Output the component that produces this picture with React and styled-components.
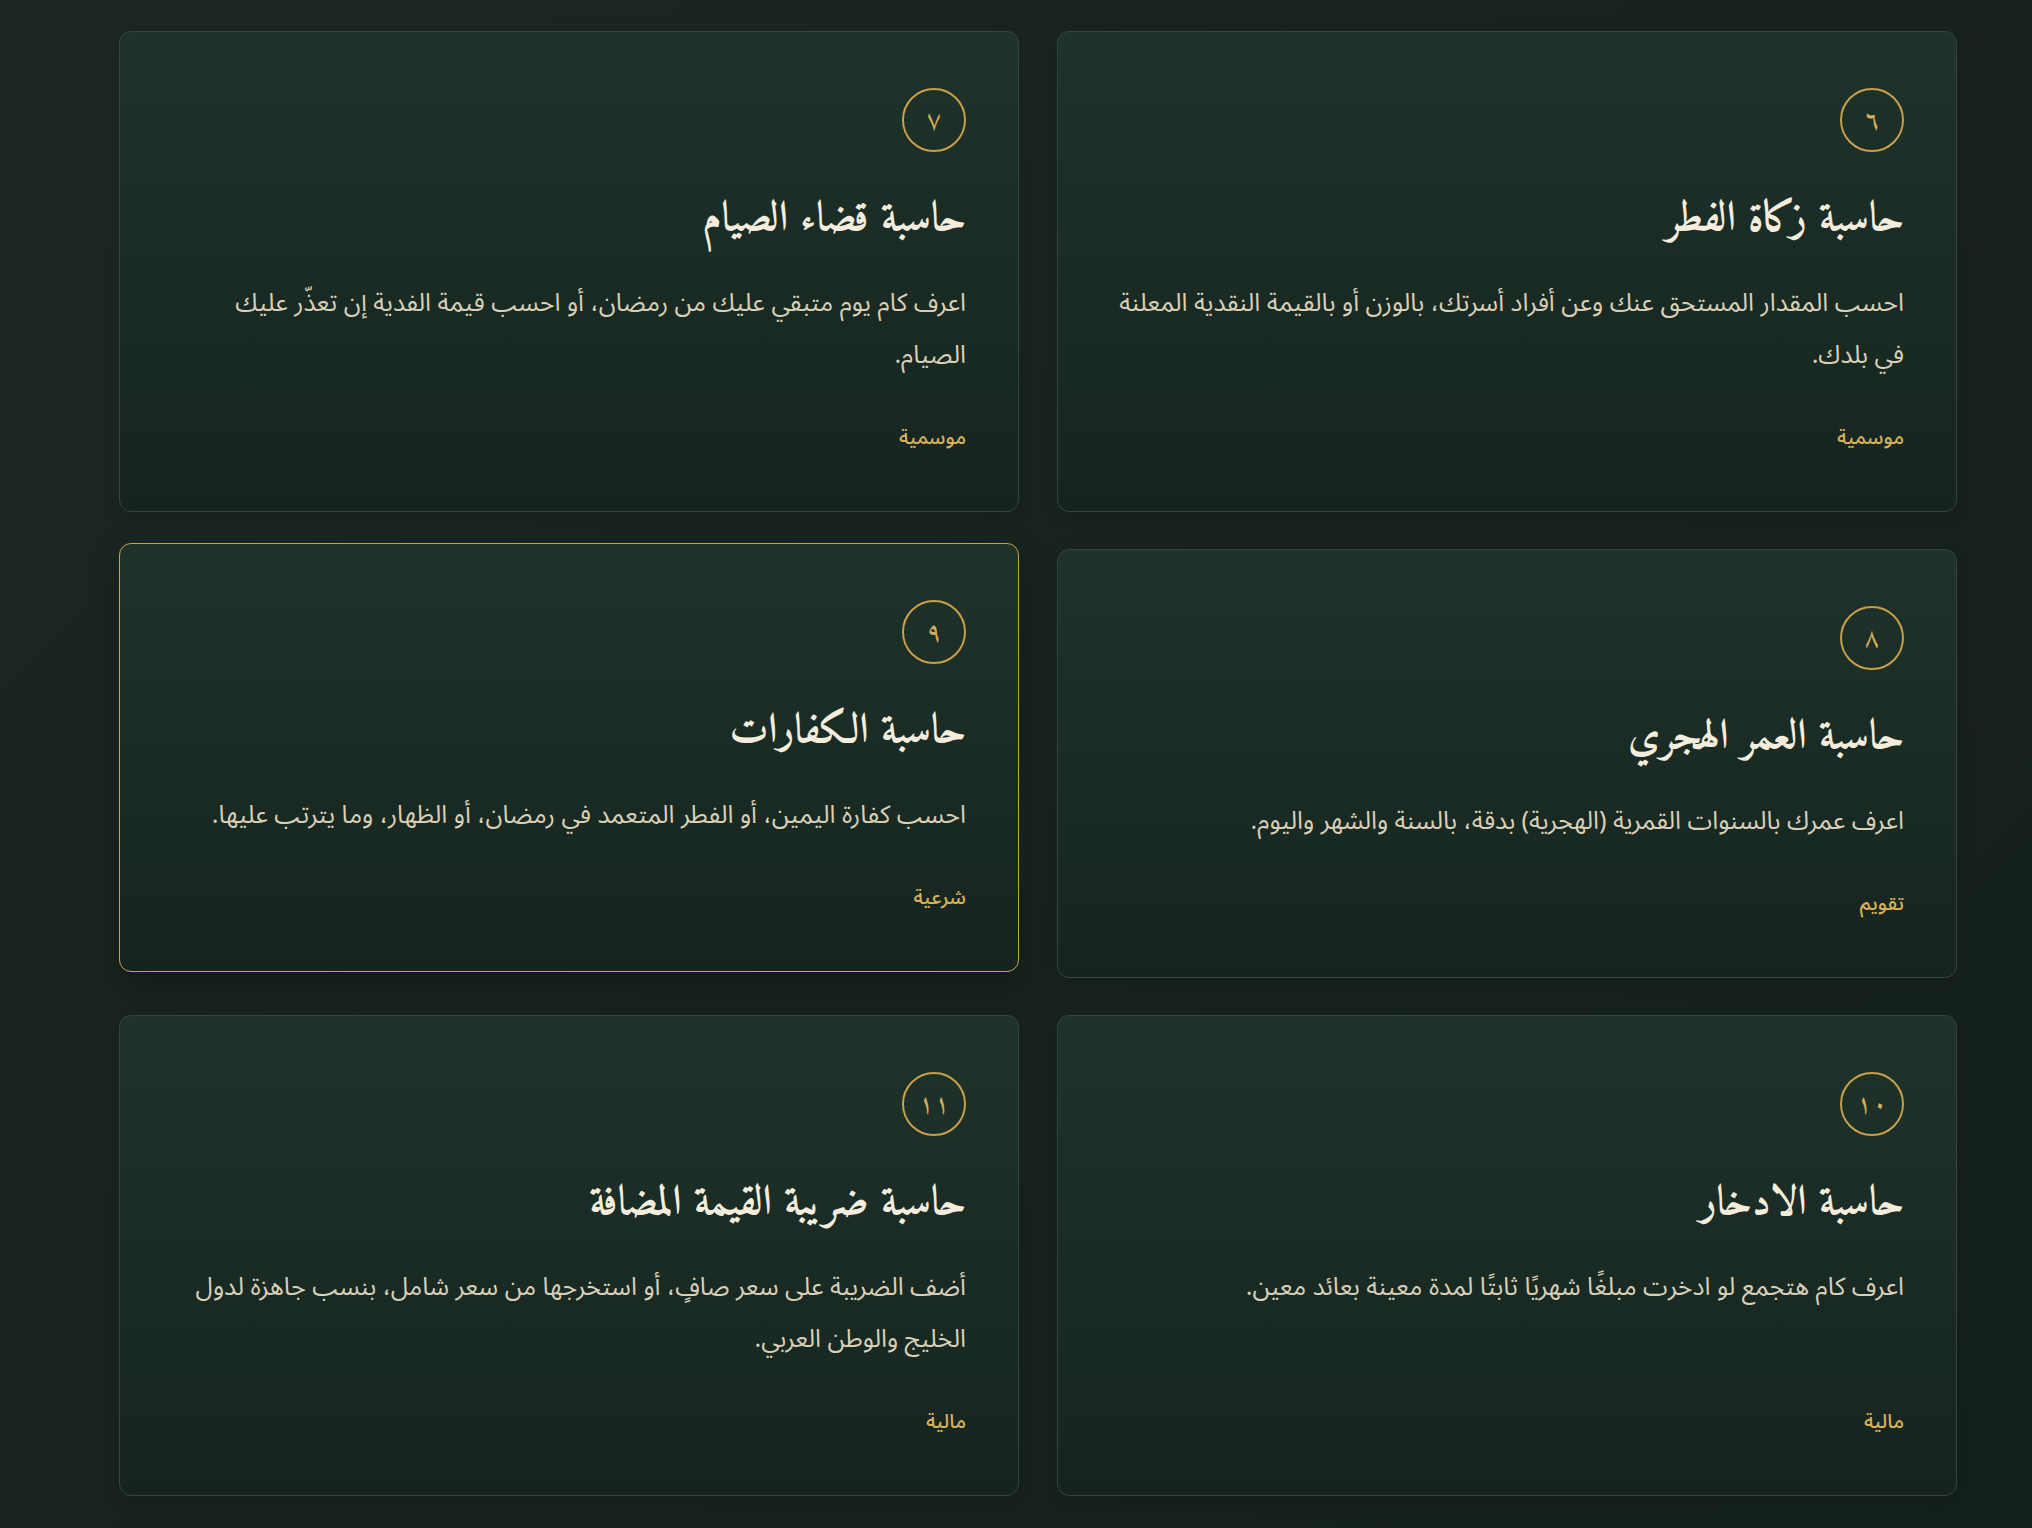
import React from "react";
import styled, { createGlobalStyle } from "styled-components";

const GlobalStyle = createGlobalStyle`
  html, body {
    margin: 0;
    padding: 0;
  }
  body {
    min-height: 100vh;
    background: linear-gradient(135deg, #1c2722 0%, #18231f 50%, #14201b 100%);
    font-family: "Noto Sans Arabic", "DejaVu Sans", sans-serif;
  }
`;

const Page = styled.main`
  min-height: 1528px;
  box-sizing: border-box;
  padding: 31px 75px 0 119px;
`;

const Grid = styled.section`
  direction: rtl;
  display: grid;
  grid-template-columns: repeat(2, 900px);
  gap: 37px 38px;
`;

const Card = styled.article`
  box-sizing: border-box;
  display: flex;
  flex-direction: column;
  align-items: flex-start;
  padding: 56px 52px 58px 52px;
  border-radius: 12px;
  border: 1px solid ${(p) => (p.$active ? "#c9a24c" : "#34453d")};
  background: linear-gradient(180deg, #1f332b 0%, #1a2c25 45%, #16241f 100%);
  transform: ${(p) => (p.$active ? "translateY(-6px)" : "none")};
  box-shadow: ${(p) =>
    p.$active ? "0 14px 30px rgba(0, 0, 0, 0.25)" : "0 4px 14px rgba(0, 0, 0, 0.15)"};
`;

const Badge = styled.div`
  box-sizing: border-box;
  width: 64px;
  height: 64px;
  border-radius: 50%;
  border: 2px solid #c9a04a;
  display: flex;
  align-items: center;
  justify-content: center;
  color: #d4ad58;
  font-family: "Amiri", "Noto Naskh Arabic", serif;
  font-size: 27px;
  line-height: 1;
  padding-top: 2px;
  margin-bottom: 40px;
`;

const Title = styled.h3`
  margin: 0 0 29px;
  font-family: "Amiri", "Noto Naskh Arabic", serif;
  font-weight: 700;
  font-size: 42px;
  line-height: 56px;
  color: #f4ecdc;
`;

const Description = styled.p`
  margin: 0 0 42px;
  font-family: "Noto Sans Arabic", "DejaVu Sans", sans-serif;
  font-weight: 400;
  font-size: 25px;
  line-height: 52px;
  color: #d9cfb7;
`;

const Tag = styled.span`
  margin-top: auto;
  font-family: "Noto Sans Arabic", "DejaVu Sans", sans-serif;
  font-size: 20px;
  font-weight: 500;
  line-height: 30px;
  color: #d8b05a;
`;

const tools = [
  {
    n: "٦",
    title: "حاسبة زكاة الفطر",
    desc: "احسب المقدار المستحق عنك وعن أفراد أسرتك، بالوزن أو بالقيمة النقدية المعلنة في بلدك.",
    tag: "موسمية",
  },
  {
    n: "٧",
    title: "حاسبة قضاء الصيام",
    desc: "اعرف كام يوم متبقي عليك من رمضان، أو احسب قيمة الفدية إن تعذّر عليك الصيام.",
    tag: "موسمية",
  },
  {
    n: "٨",
    title: "حاسبة العمر الهجري",
    desc: "اعرف عمرك بالسنوات القمرية (الهجرية) بدقة، بالسنة والشهر واليوم.",
    tag: "تقويم",
  },
  {
    n: "٩",
    title: "حاسبة الكفارات",
    desc: "احسب كفارة اليمين، أو الفطر المتعمد في رمضان، أو الظهار، وما يترتب عليها.",
    tag: "شرعية",
    active: true,
  },
  {
    n: "١٠",
    title: "حاسبة الادخار",
    desc: "اعرف كام هتجمع لو ادخرت مبلغًا شهريًا ثابتًا لمدة معينة بعائد معين.",
    tag: "مالية",
  },
  {
    n: "١١",
    title: "حاسبة ضريبة القيمة المضافة",
    desc: "أضف الضريبة على سعر صافٍ، أو استخرجها من سعر شامل، بنسب جاهزة لدول الخليج والوطن العربي.",
    tag: "مالية",
  },
];

export default function App() {
  return (
    <>
      <GlobalStyle />
      <Page>
        <Grid>
          {tools.map((t) => (
            <Card key={t.n} $active={t.active}>
              <Badge>{t.n}</Badge>
              <Title>{t.title}</Title>
              <Description>{t.desc}</Description>
              <Tag>{t.tag}</Tag>
            </Card>
          ))}
        </Grid>
      </Page>
    </>
  );
}
